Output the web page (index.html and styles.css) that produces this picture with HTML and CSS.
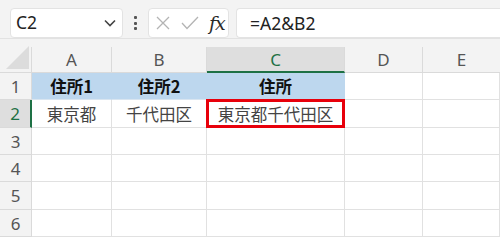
FILE: index.html
```html
<!DOCTYPE html>
<html lang="ja">
<head>
<meta charset="utf-8">
<link rel="stylesheet" href="styles.css">
</head>
<body>
<div class="app">
  <div class="toolbar">
    <div class="namebox">
      <span class="nb-text">C2</span>
      <svg class="chev" width="12" height="8" viewBox="0 0 12 8"><path d="M1 1.5 L6 6.5 L11 1.5" fill="none" stroke="#444" stroke-width="1.6"/></svg>
    </div>
    <div class="dots"><i></i><i></i><i></i></div>
    <div class="fxbox">
      <svg class="ic" width="14" height="14" viewBox="0 0 14 14"><path d="M1 1 L13 13 M13 1 L1 13" stroke="#b4b4b4" stroke-width="1.3" fill="none"/></svg>
      <svg class="ic" width="18" height="14" viewBox="0 0 18 14"><path d="M1 7 L6 12.5 L17 1" stroke="#b4b4b4" stroke-width="1.3" fill="none"/></svg>
      <span class="fx">fx</span>
    </div>
    <div class="formula">=A2&amp;B2</div>
  </div>
  <div class="sheet">
    <div class="corner"><svg width="24" height="24" viewBox="0 0 24 24"><path d="M23 0 L23 23 L0 23 Z" fill="#dcdcdc"/></svg></div>
    <div class="ch">A</div>
    <div class="ch">B</div>
    <div class="ch sel">C</div>
    <div class="ch">D</div>
    <div class="ch last">E</div>

    <div class="rh">1</div>
    <div class="c hd">住所1</div>
    <div class="c hd">住所2</div>
    <div class="c hd">住所</div>
    <div class="c"></div>
    <div class="c"></div>

    <div class="rh sel">2</div>
    <div class="c">東京都</div>
    <div class="c">千代田区</div>
    <div class="c active">東京都千代田区</div>
    <div class="c"></div>
    <div class="c"></div>

    <div class="rh">3</div>
    <div class="c"></div><div class="c"></div><div class="c"></div><div class="c"></div><div class="c"></div>
    <div class="rh">4</div>
    <div class="c"></div><div class="c"></div><div class="c"></div><div class="c"></div><div class="c"></div>
    <div class="rh">5</div>
    <div class="c"></div><div class="c"></div><div class="c"></div><div class="c"></div><div class="c"></div>
    <div class="rh">6</div>
    <div class="c"></div><div class="c"></div><div class="c"></div><div class="c"></div><div class="c"></div>
  </div>
</div>
</body>
</html>
```

FILE: styles.css
```css
html, body {
  margin: 0;
  padding: 0;
  background: #ffffff;
}
.app {
  width: 500px;
  height: 237px;
  overflow: hidden;
  background: #f3f3f3;
  font-family: "Noto Sans", "Noto Sans CJK JP", sans-serif;
}
.toolbar {
  height: 39px;
  box-sizing: border-box;
  padding: 8px 0 0 10px;
  display: flex;
  align-items: flex-start;
  border-bottom: 1px solid #e2e2e2;
}
.namebox {
  width: 113px;
  height: 30px;
  box-sizing: border-box;
  background: #fff;
  border: 1px solid #e3e3e3;
  border-radius: 4px;
  display: flex;
  align-items: center;
  justify-content: space-between;
  padding: 0 4px 0 5px;
}
.nb-text {
  font-size: 17.5px;
  color: #222;
  line-height: 1;
}
.chev { margin-right: 2px; }
.dots {
  width: 25px;
  height: 30px;
  display: flex;
  flex-direction: column;
  align-items: center;
  justify-content: center;
  gap: 2.5px;
}
.dots i {
  display: block;
  width: 3px;
  height: 3px;
  background: #555;
  border-radius: 1px;
}
.fxbox {
  width: 81px;
  height: 30px;
  box-sizing: border-box;
  background: #fff;
  border: 1px solid #e3e3e3;
  border-radius: 4px;
  display: flex;
  align-items: center;
  padding: 0 0 0 7px;
  gap: 11px;
}
.fx {
  font-family: "DejaVu Serif", "Liberation Serif", serif;
  font-style: italic;
  font-size: 19px;
  color: #2a2a2a;
  margin-left: -1px;
  letter-spacing: -1px;
  line-height: 1;
}
.formula {
  margin-left: 7px;
  flex: 1;
  height: 30px;
  box-sizing: border-box;
  background: #fff;
  border: 1px solid #e3e3e3;
  border-right: none;
  border-radius: 4px 0 0 4px;
  font-size: 17.5px;
  color: #222;
  line-height: 28px;
  padding-left: 13px;
}
.sheet {
  margin-top: 8px;
  display: grid;
  grid-template-columns: 32px 80px 95px 138px 78px 77px;
  grid-template-rows: 26px 27px 28px 27px 27px 28px 27px;
  background: #fff;
}
.corner {
  background: #f3f3f3;
  border-right: 1px solid #dadada;
  border-bottom: 1px solid #dadada;
  box-sizing: border-box;
  display: flex;
  align-items: flex-end;
  justify-content: flex-end;
  padding: 0 1px 2px 0;
}
.corner svg { display: block; }
.ch {
  background: #f3f3f3;
  border-right: 1px solid #dadada;
  border-bottom: 1px solid #dadada;
  box-sizing: border-box;
  font-size: 17px;
  color: #555;
  text-align: center;
  line-height: 25px;
}
.ch.last { border-right: none; }
.ch.sel {
  background: #dedede;
  color: #1e7145;
  border-bottom: 2px solid #1e7145;
}
.rh {
  background: #f3f3f3;
  border-right: 1px solid #dadada;
  border-bottom: 1px solid #dadada;
  box-sizing: border-box;
  font-size: 17px;
  color: #555;
  text-align: center;
  display: flex;
  align-items: center;
  justify-content: center;
}
.rh.sel {
  background: #dedede;
  color: #1e7145;
  border-right: 2px solid #1e7145;
}
.c {
  border-right: 1px solid #e1e1e1;
  border-bottom: 1px solid #e1e1e1;
  box-sizing: border-box;
  font-family: "Noto Sans CJK JP", sans-serif;
  font-size: 16.5px;
  color: #444;
  display: flex;
  align-items: center;
  justify-content: center;
  white-space: nowrap;
}
.c.hd {
  background: #bdd7ee;
  font-weight: bold;
  color: #111;
  border-right-color: #bdd7ee;
  border-bottom-color: #d9e5f0;
}
.c.active {
  position: relative;
}
.c.active::after {
  content: "";
  position: absolute;
  left: -1px;
  top: -1px;
  right: -1px;
  bottom: -1px;
  border: 3px solid #e8000b;
}
```
